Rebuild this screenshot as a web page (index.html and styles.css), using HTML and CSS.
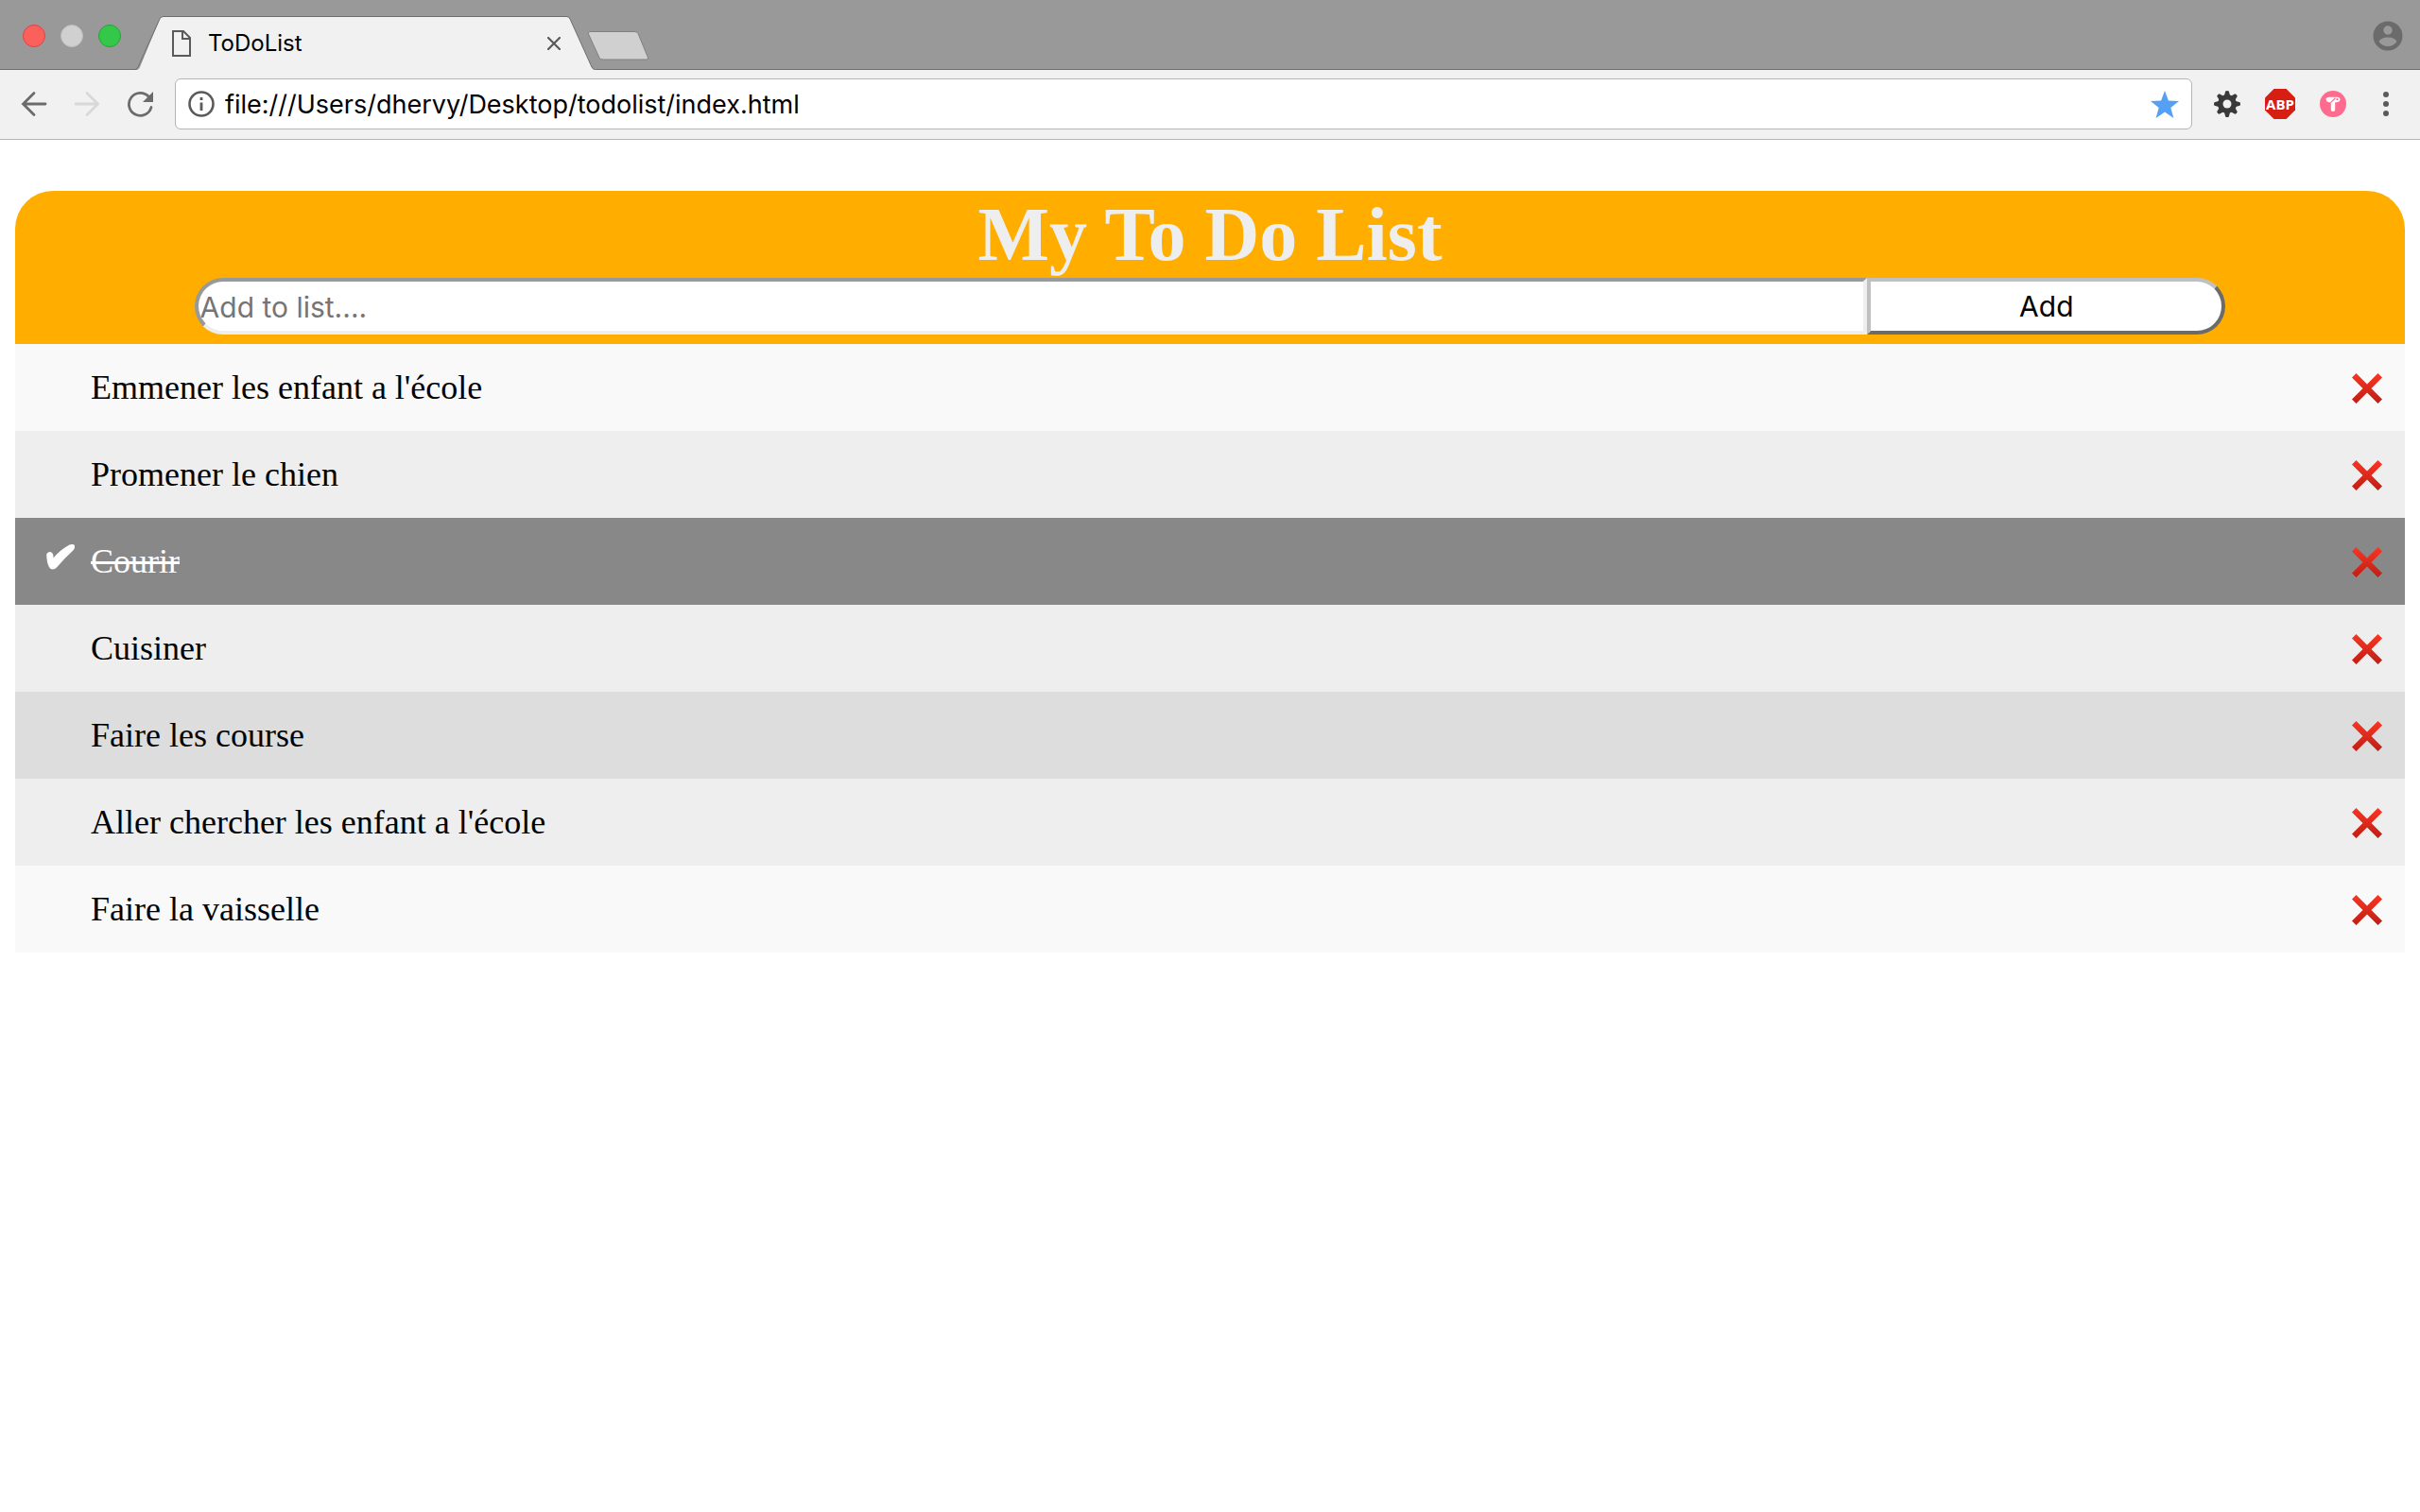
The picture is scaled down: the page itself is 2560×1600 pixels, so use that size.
FILE: index.html
```html
<!DOCTYPE html>
<html lang="fr">
<head>
<meta charset="utf-8">
<title>ToDoList</title>
<link rel="stylesheet" href="styles.css">
</head>
<body>
<header class="browser">
  <div class="tabstrip">
    <div class="lights">
      <span class="light light-close"></span>
      <span class="light light-min"></span>
      <span class="light light-max"></span>
    </div>
    <div class="tab">
      <svg class="tab-shape" viewBox="0 0 488 57" aria-hidden="true">
        <path d="M0 57 Q4 57 5 54 L26 3 Q27 .5 30 .5 H456 Q459 .5 460 3 L483 54 Q484 57 488 57Z" fill="#f1f1f1"/>
        <path d="M0 56.5 Q2 56 3 54 L26 3 Q27 .5 30 .5 H456 Q459 .5 460 3 L483 54 Q484 56 486 56.5" fill="none" stroke="#6e6e6e"/>
      </svg>
      <svg class="page-icon" viewBox="0 0 20 28" aria-hidden="true"><path d="M1 1h11l7 7v19H1zM11 1v8h8" fill="none" stroke="#5a5a5a" stroke-width="2"/></svg>
      <span class="tab-title">ToDoList</span>
      <button class="tab-close" aria-label="Close tab"><svg width="14" height="14" viewBox="0 0 14 14"><path d="M1 1l12 12M13 1L1 13" stroke="#5a5a5a" stroke-width="2.2" stroke-linecap="round"/></svg></button>
    </div>
    <button class="new-tab" aria-label="New tab"><svg width="66" height="33" viewBox="0 0 66 33"><path d="M4 1.500H50q3 0 4 2L64.500 29q.5 2-2 2H17q-3 0-4-2L1.500 4q-1-2.500 2.500-2.500z" fill="#d0d0d0" stroke="#808080"/></svg></button>
    <button class="profile" aria-label="Profile"><svg width="32" height="32" viewBox="0 0 32 32"><circle cx="16" cy="16" r="15.500" fill="#6b6b6b"/><circle cx="16" cy="10" r="4.700" fill="#999"/><path d="M6.500 22q2-4.500 9.500-4.500t9.500 4.500q-3.500 5-9.500 5t-9.500-5z" fill="#999"/></svg></button>
  </div>
  <nav class="toolbar">
    <button aria-label="Back"><svg width="28" height="28" viewBox="0 0 28 28"><path d="M26 14H3M14 2.500L2.500 14 14 25.500" fill="none" stroke="#6b6b6b" stroke-width="2.800" stroke-linecap="round"/></svg></button>
    <button aria-label="Forward"><svg width="28" height="28" viewBox="0 0 28 28"><path d="M2 14h23M14 2.500L25.500 14 14 25.500" fill="none" stroke="#d8d8d8" stroke-width="2.800" stroke-linecap="round"/></svg></button>
    <button aria-label="Reload"><svg width="28" height="28" viewBox="0 0 28 28"><path d="M26 17.500A12 12 0 1 1 23.500 6.500" fill="none" stroke="#6b6b6b" stroke-width="2.800" stroke-linecap="round"/><path d="M28 1v11h-11z" fill="#6b6b6b"/></svg></button>
    <div class="address">
      <svg width="28" height="28" viewBox="0 0 28 28" aria-hidden="true"><circle cx="14" cy="14" r="12.500" fill="none" stroke="#5a5a5a" stroke-width="2.600"/><path d="M14 7v3M14 12.500v8.500" stroke="#5a5a5a" stroke-width="2.800"/></svg>
      <input class="url" type="text" aria-label="Address" value="file:///Users/dhervy/Desktop/todolist/index.html">
      <button aria-label="Bookmark"><svg width="30" height="29" viewBox="0 0 30 29"><path d="M15 0l3.900 10.600L30 11l-8.700 6.900L24.400 29 15 22.500 5.600 29l3.100-11.100L0 11l11.100-.4z" fill="#559ff5"/></svg></button>
    </div>
    <button aria-label="Settings"><svg width="28" height="28" viewBox="-14 -14 28 28"><g fill="#3a3a3a"><path id="t" d="M-3-9l1.200-4.500q1.800-1 3.600 0L3-9V9l-1.200 4.500q-1.800 1-3.600 0L-3 9z"/><use href="#t" transform="rotate(45)"/><use href="#t" transform="rotate(90)"/><use href="#t" transform="rotate(135)"/><circle r="10"/></g><circle r="4.500" fill="#f1f1f1"/></svg></button>
    <button class="adblock" aria-label="Adblock Plus"><svg width="32" height="32" viewBox="0 0 32 32"><path d="M9.500 0h13L32 9.500v13L22.500 32h-13L0 22.500v-13z" fill="#d61f12"/><text class="abp" x="16" y="22" text-anchor="middle">ABP</text></svg></button>
    <button aria-label="Extension"><svg width="28" height="28" viewBox="0 0 28 28"><circle cx="14" cy="14" r="14" fill="#ff6b8f"/><path d="M6.500 8.500q1-2 4-1.700h8q3 .2 3 2.700-.5 2.500-4 2.700h-1.300V20q0 2-2.200 2t-2.200-2v-7.800H10q-3.200-.2-3.500-3.700z" fill="#fff"/><path d="M11.500 12.600l5-4.800" stroke="#ff6b8f" stroke-width="1.200"/><circle cx="18.500" cy="9.200" r="1.100" fill="#ff6b8f"/></svg></button>
    <button aria-label="Menu"><svg width="28" height="28" viewBox="0 0 28 28"><g fill="#5a5a5a"><circle cx="14" cy="4" r="3"/><circle cx="14" cy="14" r="3"/><circle cx="14" cy="24" r="3"/></g></svg></button>
  </nav>
</header>
<main class="todo">
  <form class="head">
    <h1>My To Do List</h1>
    <div class="entry">
      <input class="entry-text" type="text" placeholder="Add to list...." aria-label="Add to list">
      <button class="entry-add" type="button">Add</button>
    </div>
  </form>
  <svg class="defs" width="0" height="0" aria-hidden="true"><defs>
    <linearGradient id="red" x1="0" y1="0" x2="0" y2="1"><stop offset="0" stop-color="#fb3523"/><stop offset="1" stop-color="#be1e14"/></linearGradient>
    <symbol id="cross" viewBox="0 0 32 32"><path d="M4.500 0L16 11.500 27.500 0 32 4.500 20.500 16 32 27.500 27.500 32 16 20.500 4.500 32 0 27.500 11.500 16 0 4.500z" fill="url(#red)"/></symbol>
  </defs></svg>
  <ul class="list">
    <li>Emmener les enfant a l'école<button class="remove" aria-label="Remove"><svg width="32" height="32"><use href="#cross"/></svg></button></li>
    <li>Promener le chien<button class="remove" aria-label="Remove"><svg width="32" height="32"><use href="#cross"/></svg></button></li>
    <li class="done"><svg class="check" viewBox="0 0 30 27" aria-hidden="true"><path d="M.3 13Q-.3 8.500 3.500 8q3.500 0 4 4.500v2Q14 6.500 24 .8q5-2 6 .7.500 2-1.200 4.500Q20 14 10.500 25 8 27.300 4.500 26 1 23 .3 13z" fill="#fff"/></svg><s>Courir</s><button class="remove" aria-label="Remove"><svg width="32" height="32"><use href="#cross"/></svg></button></li>
    <li>Cuisiner<button class="remove" aria-label="Remove"><svg width="32" height="32"><use href="#cross"/></svg></button></li>
    <li class="hovered">Faire les course<button class="remove" aria-label="Remove"><svg width="32" height="32"><use href="#cross"/></svg></button></li>
    <li>Aller chercher les enfant a l'école<button class="remove" aria-label="Remove"><svg width="32" height="32"><use href="#cross"/></svg></button></li>
    <li>Faire la vaisselle<button class="remove" aria-label="Remove"><svg width="32" height="32"><use href="#cross"/></svg></button></li>
  </ul>
</main>
</body>
</html>
```
FILE: styles.css
```css
* { box-sizing: border-box; }
body { margin: 0; background: #fff; color: #000; font-family: "Liberation Serif", serif; }
button { padding: 0; border: 0; background: none; }
svg { display: block; flex: none; }

.browser { font-family: Inter, sans-serif; }
.tabstrip { display: flex; height: 74px; background: #999; border-bottom: 1px solid #6e6e6e; }
.lights { display: flex; gap: 16px; padding: 26px 0 0 24px; width: 143px; }
.light { width: 24px; height: 24px; border: 1px solid #e04343; border-radius: 50%; background: #fc605b; }
.light-min { border-color: #bdbdbd; background: #d0d0d0; }
.light-max { border-color: #25a536; background: #34c84a; }
.tab { position: relative; display: flex; align-items: center; width: 488px; height: 57px; margin-top: 17px; padding: 0 38px 0 39px; }
.tab-shape { position: absolute; inset: 0; width: 100%; height: 100%; }
.page-icon { position: relative; width: 20px; height: 28px; }
.tab-title { position: relative; flex: 1; padding-left: 18px; font-size: 24px; }
.tab-close { position: relative; }
.new-tab { align-self: flex-end; margin: 0 auto 8px -10px; }
.profile { margin: 2px 18px 0 0; }

.toolbar { display: flex; align-items: center; gap: 28px; height: 74px; padding: 0 22px 1px; background: #f1f1f1; border-bottom: 1px solid #b5b5b5; }
.address { flex: 1; display: flex; align-items: center; height: 54px; margin: 0 -5px; padding: 0 13px; border: 1px solid #b5b5b5; border-radius: 6px; background: #fff; }
.url { flex: 1; margin: 0 0 0 11px; padding: 0; border: 0; outline: 0; font: 27px Inter, sans-serif; }
.adblock { margin: 0 -2px; }
.abp { font: bold 15px "Open Sans", sans-serif; fill: #fff; }

.todo { margin: 54px 16px 0; }
.head { padding: 0 0 10px; border-radius: 40px 40px 0 0; background: #ffae00; }
.head h1 { margin: 0; font-size: 80px; line-height: 92px; text-align: center; color: #eee; }
.entry { display: flex; justify-content: center; }
.entry-text, .entry-add { height: 60px; padding: 0; border: 4px solid; background: #fff; font: 30px Inter, sans-serif; color: #000; }
.entry-text { width: 70%; padding: 1px 2px 0; border-color: #999 #eee #eee #999; border-radius: 30px 0 0 30px; }
.entry-text::placeholder { color: #757575; }
.entry-add { width: 15%; padding-bottom: 1px; border-color: #c0c0c0 #6b6b6b #6b6b6b #c0c0c0; border-radius: 0 30px 30px 0; }
.defs { position: absolute; }

.list { margin: 0; padding: 0; list-style: none; }
.list li { position: relative; display: flex; align-items: center; height: 92px; padding: 0 24px 0 80px; background: #eee; font-size: 36px; }
.list li:nth-child(odd) { background: #f9f9f9; }
.list li.done { background: #888; color: #fff; }
.list li.hovered { background: #ddd; }
.check { position: absolute; left: 33px; top: 28px; width: 30px; height: 27px; }
.remove { margin: 2px 0 0 auto; }
```
